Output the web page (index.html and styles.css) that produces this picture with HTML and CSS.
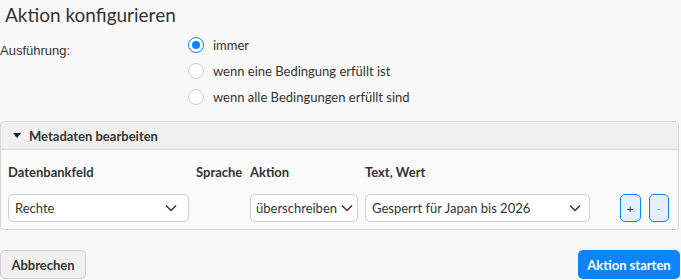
FILE: index.html
```html
<!DOCTYPE html>
<html lang="de">
<head>
<meta charset="utf-8">
<link rel="stylesheet" href="styles.css">
</head>
<body>
<div class="page">
  <h1 class="title">Aktion konfigurieren</h1>
  <div class="exec">
    <div class="exec-label">Ausführung:</div>
    <div class="radios">
      <label class="radio"><span class="dot checked"></span>immer</label>
      <label class="radio"><span class="dot"></span>wenn eine Bedingung erfüllt ist</label>
      <label class="radio"><span class="dot"></span>wenn alle Bedingungen erfüllt sind</label>
    </div>
  </div>
  <div class="panel">
    <div class="panel-head"><span class="tri"></span>Metadaten bearbeiten</div>
    <div class="panel-body">
      <div class="grid">
        <div class="th c1">Datenbankfeld</div>
        <div class="th c2">Sprache</div>
        <div class="th c3">Aktion</div>
        <div class="th c4">Text, Wert</div>
        <div class="c5"></div>
        <div class="sel c1"><span>Rechte</span><svg class="chev" viewBox="0 0 12 8"><path d="M1 1.5 L6 6.5 L11 1.5" fill="none" stroke="#333" stroke-width="1.5"/></svg></div>
        <div class="c2"></div>
        <div class="sel c3"><span>überschreiben</span><svg class="chev" viewBox="0 0 12 8"><path d="M1 1.5 L6 6.5 L11 1.5" fill="none" stroke="#333" stroke-width="1.5"/></svg></div>
        <div class="sel c4"><span>Gesperrt für Japan bis 2026</span><svg class="chev" viewBox="0 0 12 8"><path d="M1 1.5 L6 6.5 L11 1.5" fill="none" stroke="#333" stroke-width="1.5"/></svg></div>
        <div class="btns c5"><button class="pm">+</button><button class="pm minus">-</button></div>
      </div>
    </div>
  </div>
  <div class="footer">
    <button class="btn cancel">Abbrechen</button>
    <button class="btn primary">Aktion starten</button>
  </div>
</div>
</body>
</html>
```
FILE: styles.css
```css
html, body {
  margin: 0;
  padding: 0;
  background: #f9f9f9;
}
body {
  font-family: "Lato", "Noto Sans", sans-serif;
  color: #333;
  font-size: 13px;
}
.page {
  width: 681px;
  height: 280px;
  overflow: hidden;
}
.title {
  margin: 0;
  padding: 3px 0 0 5px;
  font-size: 19px;
  font-weight: 400;
  line-height: 24px;
  color: #333;
}
.exec {
  display: flex;
  margin-top: 5px;
}
.exec-label {
  width: 188px;
  font-family: "Liberation Sans", Arial, sans-serif;
  font-size: 13px;
  line-height: 26px;
  padding-top: 6px;
  color: #333;
}
.radios {
  display: flex;
  flex-direction: column;
}
.radio {
  display: flex;
  align-items: center;
  height: 26px;
  gap: 9px;
  font-size: 13px;
}
.dot {
  width: 14px;
  height: 14px;
  border: 1px solid #cfcfcf;
  border-radius: 50%;
  background: #fff;
  box-sizing: content-box;
  display: inline-block;
  position: relative;
}
.dot.checked {
  border-color: #0d84ff;
}
.dot.checked::after {
  content: "";
  position: absolute;
  left: 3px;
  top: 3px;
  width: 8px;
  height: 8px;
  border-radius: 50%;
  background: #0d84ff;
}
.panel {
  margin-top: 11px;
  width: 679px;
  border: 1px solid #d6d6d6;
  border-radius: 4px;
  background: #fafafa;
  box-sizing: border-box;
}
.panel-head {
  height: 28px;
  background: #f0f0f0;
  border-bottom: 1px solid #d6d6d6;
  border-radius: 4px 4px 0 0;
  display: flex;
  align-items: center;
  font-weight: 700;
  font-size: 13px;
  padding-left: 12px;
  box-sizing: border-box;
}
.tri {
  width: 0;
  height: 0;
  border-left: 4px solid transparent;
  border-right: 4px solid transparent;
  border-top: 5px solid #222;
  margin-right: 8px;
}
.panel-body {
  padding: 12px 7px 7px 7px;
}
.grid {
  display: grid;
  grid-template-columns: 188px 54px 115px 255px 49px;
  grid-template-rows: 20px 28px;
  row-gap: 12px;
  align-items: center;
}
.th {
  font-weight: 700;
  font-size: 13px;
}
.grid > .c1 { grid-column: 1; }
.grid > .c2 { grid-column: 2; }
.grid > .c3 { grid-column: 3; }
.grid > .c4 { grid-column: 4; }
.grid > .c5 { grid-column: 5; }
.sel {
  height: 28px;
  border: 1px solid #cfcfcf;
  border-radius: 5px;
  background: #fff;
  display: flex;
  align-items: center;
  justify-content: space-between;
  padding: 0 11px 0 6px;
  box-sizing: border-box;
  font-size: 13px;
}
.sel.c1 { width: 181px; }
.sel.c3 { width: 108px; padding: 0 4px 0 5px; }
.sel.c4 { width: 225px; padding-right: 8px; }
.chev {
  width: 12px;
  height: 8px;
}
.btns {
  display: flex;
  gap: 8px;
}
.pm {
  width: 22px;
  height: 28px;
  border: 1px solid #0d84ff;
  background: #e4f0fd;
  border-radius: 5px;
  padding: 0;
  font-family: "Lato", sans-serif;
  font-size: 12px;
  color: #333;
}
.pm.minus { color: #999; }
.footer {
  display: flex;
  justify-content: space-between;
  margin-top: 20px;
  padding-right: 1px;
}
.btn {
  height: 29px;
  border-radius: 5px;
  font-family: "Lato", sans-serif;
  font-weight: 700;
  font-size: 13px;
  padding: 0 10px;
}
.cancel {
  width: 86px;
  border: 1px solid #cfcfcf;
  background: #f0f0f0;
  color: #333;
}
.primary {
  width: 102px;
  border: none;
  background: #0d84ff;
  color: #fff;
  padding: 0 8px;
}
```
